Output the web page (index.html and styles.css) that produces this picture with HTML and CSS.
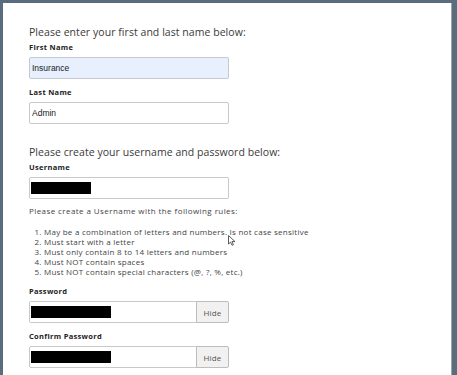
FILE: index.html
```html
<!DOCTYPE html>
<html lang="en">
<head>
  <meta charset="UTF-8">
  <meta name="viewport" content="width=device-width, initial-scale=1.0">
  <title>Create Account</title>
  <link rel="stylesheet" href="styles.css">
</head>
<body>
  <div class="panel">
    <h2 class="section-title">Please enter your first and last name below:</h2>
    <label class="field-label">First Name</label>
    <input class="text-input autofilled" type="text" value="Insurance">
    <label class="field-label">Last Name</label>
    <input class="text-input" type="text" value="Admin">

    <h2 class="section-title section-gap">Please create your username and password below:</h2>
    <label class="field-label">Username</label>
    <div class="text-input masked username">
      <span class="redacted redacted-user"></span>
    </div>

    <p class="rules-intro">Please create a Username with the following rules:</p>
    <ol class="rules">
      <li>May be a combination of letters and numbers. Is not case sensitive</li>
      <li>Must start with a letter</li>
      <li>Must only contain 8 to 14 letters and numbers</li>
      <li>Must NOT contain spaces</li>
      <li>Must NOT contain special characters (@, ?, %, etc.)</li>
    </ol>

    <label class="field-label">Password</label>
    <div class="input-group">
      <div class="text-input masked grouped">
        <span class="redacted redacted-pass"></span>
      </div>
      <button class="toggle-btn" type="button">Hide</button>
    </div>

    <label class="field-label">Confirm Password</label>
    <div class="input-group">
      <div class="text-input masked grouped">
        <span class="redacted redacted-pass"></span>
      </div>
      <button class="toggle-btn" type="button">Hide</button>
    </div>

    <!-- mouse pointer captured in the screenshot -->
    <svg class="pointer" width="8" height="11" viewBox="0 0 8 11">
      <path d="M0.5 0.5 L0.5 9 L2.6 7.1 L4 10.3 L5.4 9.7 L4 6.6 L7 6.6 Z" fill="#fff" stroke="#333" stroke-width="0.8" stroke-linejoin="round"/>
    </svg>
  </div>
</body>
</html>
```

FILE: styles.css
```css
html, body {
  margin: 0;
  height: 100%;
}
body {
  background: #5b6c7d;
  padding: 3px 5px 0 3px;
  box-sizing: border-box;
  font-family: 'Open Sans', 'Liberation Sans', sans-serif;
  color: #333;
  overflow: hidden;
}
.panel {
  position: relative;
  background: #fff;
  height: 100%;
  padding: 23px 0 0 26px;
  box-sizing: border-box;
  border-right: 1px solid #9aa5b0;
}
.section-title {
  margin: 0 0 5px;
  font-size: 10.5px;
  line-height: 12px;
  letter-spacing: 0.05px;
  font-weight: 400;
  color: #3a3a3a;
}
.section-gap {
  margin-top: 22px;
}
.field-label {
  display: block;
  font-size: 7.5px;
  line-height: 9px;
  letter-spacing: 0.3px;
  font-weight: 700;
  color: #222;
  margin-bottom: 5px;
}
.text-input {
  display: block;
  width: 200px;
  height: 22px;
  margin: 0 0 9px;
  padding: 0 2px;
  box-sizing: border-box;
  border: 1px solid #c9c9c9;
  border-radius: 2px;
  background: #fff;
  font-family: 'Liberation Sans', Arial, sans-serif;
  font-size: 8.5px;
  color: #222;
  outline: none;
}
.autofilled {
  background: #e8f0fe;
  border-color: #c3c8d2;
}
.masked {
  display: flex;
  align-items: center;
  padding: 0 1px;
}
.username {
  margin-bottom: 7px;
}
.redacted {
  display: block;
  background: #000;
}
.redacted-user {
  width: 60px;
  height: 12px;
}
.redacted-pass {
  width: 80px;
  height: 12px;
}
.rules-intro {
  margin: 7px 0 11px;
  font-size: 8px;
  line-height: 10px;
  letter-spacing: 0.42px;
  color: #444;
}
.rules {
  margin: 0 0 10px;
  padding-left: 15px;
  font-size: 8px;
  line-height: 10px;
  letter-spacing: 0.25px;
  color: #444;
}
.input-group {
  display: flex;
  width: 200px;
  margin-bottom: 9px;
}
.grouped {
  flex: 1;
  margin: 0;
  border-radius: 2px 0 0 2px;
}
.toggle-btn {
  width: 33px;
  height: 22px;
  margin-left: -1px;
  padding: 0;
  border: 1px solid #bdbdbd;
  border-radius: 0 2px 2px 0;
  background: #f1f1f1;
  font-family: 'Open Sans', 'Liberation Sans', sans-serif;
  font-size: 8px;
  letter-spacing: 0.2px;
  color: #555;
}
.pointer {
  position: absolute;
  left: 225px;
  top: 232px;
}
```
